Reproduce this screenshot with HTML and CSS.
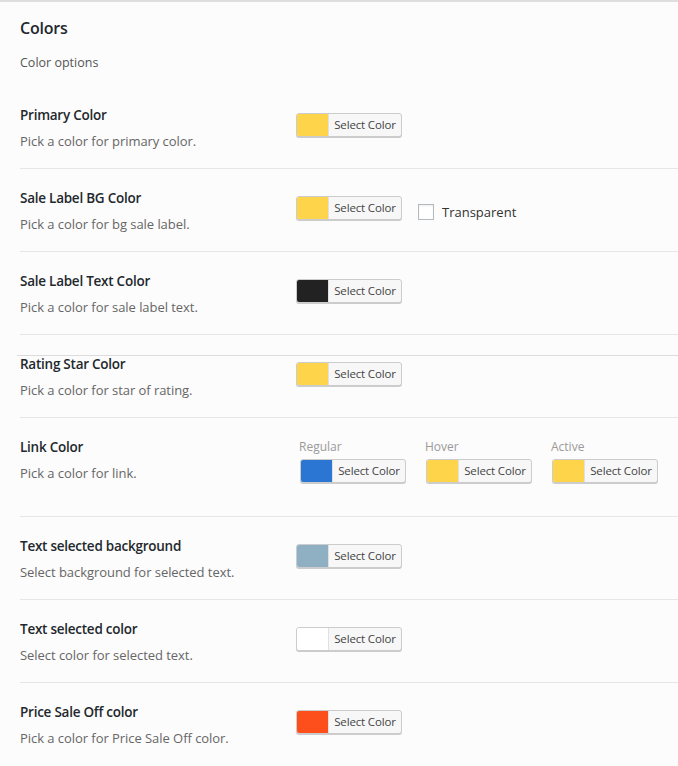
FILE: index.html
```html
<!DOCTYPE html>
<html>
<head>
<meta charset="utf-8">
<link rel="stylesheet" href="styles.css">
</head>
<body>
<div class="panel">
  <h2 class="heading">Colors</h2>
  <p class="intro">Color options</p>

  <div class="row first">
    <div class="label">
      <div class="title">Primary Color</div>
      <div class="desc">Pick a color for primary color.</div>
    </div>
    <div class="field">
      <button class="picker"><span class="swatch" style="background:#fdd44a"></span><span class="btn-text">Select Color</span></button>
    </div>
  </div>

  <div class="row">
    <div class="label">
      <div class="title">Sale Label BG Color</div>
      <div class="desc">Pick a color for bg sale label.</div>
    </div>
    <div class="field inline">
      <button class="picker"><span class="swatch" style="background:#fdd44a"></span><span class="btn-text">Select Color</span></button>
      <label class="check"><span class="box"></span>Transparent</label>
    </div>
  </div>

  <div class="row">
    <div class="label">
      <div class="title">Sale Label Text Color</div>
      <div class="desc">Pick a color for sale label text.</div>
    </div>
    <div class="field">
      <button class="picker"><span class="swatch" style="background:#222222"></span><span class="btn-text">Select Color</span></button>
    </div>
  </div>

  <div class="row glitch">
    <span class="glitch-line"></span>
    <div class="label">
      <div class="title">Rating Star Color</div>
      <div class="desc">Pick a color for star of rating.</div>
    </div>
    <div class="field">
      <button class="picker"><span class="swatch" style="background:#fdd44a"></span><span class="btn-text">Select Color</span></button>
    </div>
  </div>

  <div class="row">
    <div class="label">
      <div class="title">Link Color</div>
      <div class="desc">Pick a color for link.</div>
    </div>
    <div class="field links">
      <div class="link-item">
        <div class="sub">Regular</div>
        <button class="picker"><span class="swatch" style="background:#2a76d2"></span><span class="btn-text">Select Color</span></button>
      </div>
      <div class="link-item">
        <div class="sub">Hover</div>
        <button class="picker"><span class="swatch" style="background:#fdd44a"></span><span class="btn-text">Select Color</span></button>
      </div>
      <div class="link-item">
        <div class="sub">Active</div>
        <button class="picker"><span class="swatch" style="background:#fdd44a"></span><span class="btn-text">Select Color</span></button>
      </div>
    </div>
  </div>

  <div class="row">
    <div class="label">
      <div class="title">Text selected background</div>
      <div class="desc">Select background for selected text.</div>
    </div>
    <div class="field">
      <button class="picker"><span class="swatch" style="background:#8fb0c3"></span><span class="btn-text">Select Color</span></button>
    </div>
  </div>

  <div class="row">
    <div class="label">
      <div class="title">Text selected color</div>
      <div class="desc">Select color for selected text.</div>
    </div>
    <div class="field">
      <button class="picker"><span class="swatch" style="background:#ffffff"></span><span class="btn-text">Select Color</span></button>
    </div>
  </div>

  <div class="row last">
    <div class="label">
      <div class="title">Price Sale Off color</div>
      <div class="desc">Pick a color for Price Sale Off color.</div>
    </div>
    <div class="field">
      <button class="picker"><span class="swatch" style="background:#fd4f1b"></span><span class="btn-text">Select Color</span></button>
    </div>
  </div>
</div>
</body>
</html>
```

FILE: styles.css
```css
html, body {
  margin: 0;
  padding: 0;
  background: #fcfcfc;
}
body {
  font-family: "Open Sans", "Noto Sans", sans-serif;
  color: #23282d;
  overflow: hidden;
}
.panel {
  border-top: 2px solid #dedede;
  padding-left: 20px;
  min-height: 764px;
}
.heading {
  margin: 0;
  padding-top: 15px;
  font-size: 16px;
  font-weight: 600;
  line-height: 22px;
  letter-spacing: -0.2px;
}
.intro {
  margin: 13px 0 0;
  font-size: 12.5px;
  line-height: 22px;
  color: #555;
}
.row {
  display: flex;
  padding: 19px 0 16px;
  border-bottom: 1px solid #e6e6e6;
  position: relative;
}
.row.first {
  margin-top: 12px;
}
.row.last {
  border-bottom: none;
}
.label {
  width: 276px;
  flex: none;
}
.title {
  font-size: 13.5px;
  font-weight: 600;
  line-height: 21px;
  letter-spacing: -0.25px;
}
.desc {
  margin-top: 4px;
  font-size: 13px;
  line-height: 22px;
  color: #666;
  letter-spacing: -0.05px;
}
.field {
  padding-top: 8px;
}
.field.inline {
  display: flex;
  align-items: flex-start;
  gap: 16px;
}
.picker {
  display: flex;
  align-items: stretch;
  width: 106px;
  height: 24px;
  padding: 0;
  margin: 0;
  border: 1px solid #cccccc;
  border-radius: 3px;
  background: #f7f7f7;
  box-shadow: 0 1px 0 #cccccc;
  overflow: hidden;
  cursor: pointer;
  font-family: inherit;
}
.swatch {
  width: 31px;
  flex: none;
  border-right: 1px solid #e0e0e0;
}
.btn-text {
  flex: 1;
  font-size: 11.5px;
  line-height: 22px;
  color: #444;
  text-align: center;
  letter-spacing: -0.15px;
}
.check {
  display: flex;
  align-items: center;
  gap: 8px;
  margin-top: 8px;
  font-size: 13px;
  line-height: 16px;
  color: #333;
}
.box {
  width: 14px;
  height: 14px;
  border: 1px solid #b4b9be;
  background: #fff;
  box-shadow: inset 0 1px 2px rgba(0,0,0,0.07);
}
.glitch-line {
  position: absolute;
  left: -3px;
  right: 0;
  top: 20px;
  border-top: 1px solid #dcdcdc;
}
.field.links {
  display: flex;
  gap: 20px;
  padding-top: 2px;
  padding-left: 4px;
  padding-bottom: 17px;
}
.link-item {
  display: flex;
  flex-direction: column;
}
.sub {
  font-size: 12px;
  line-height: 16px;
  color: #9a9a9a;
  margin-bottom: 4px;
  margin-left: -1px;
}
```
